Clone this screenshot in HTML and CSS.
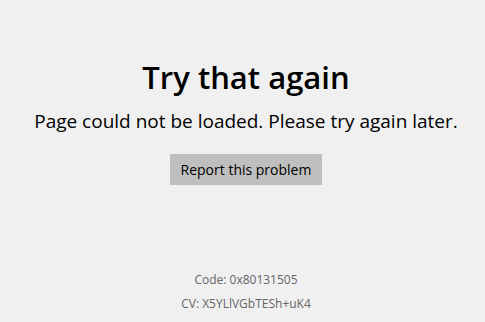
FILE: index.html
```html
<!DOCTYPE html>
<html lang="en">
<head>
    <meta charset="UTF-8">
    <title>Try that again</title>
    <link rel="stylesheet" href="styles.css">
</head>
<body>
    <div class="page">
        <h1 class="title">Try that again</h1>
        <p class="message">Page could not be loaded. Please try again later.</p>
        <button class="report">Report this problem</button>
        <div class="codes">
            <p>Code: 0x80131505</p>
            <p>CV: X5YLlVGbTESh+uK4</p>
        </div>
    </div>
</body>
</html>
```

FILE: styles.css
```css
html, body {
    margin: 0;
    height: 100%;
}

body {
    background-color: #f0f0f0;
    font-family: "Open Sans", "Noto Sans", sans-serif;
    color: #000;
}

.page {
    display: flex;
    flex-direction: column;
    align-items: center;
    height: 100%;
    padding-left: 7px;
    box-sizing: border-box;
}

.title {
    margin: 57px 0 0;
    font-size: 31px;
    font-weight: 600;
    line-height: 40px;
}

.message {
    margin: 12px 0 0;
    font-size: 19px;
    line-height: 24px;
}

.report {
    margin-top: 21px;
    width: 152px;
    height: 31px;
    border: none;
    background-color: #bfbfbf;
    font-family: inherit;
    font-size: 14px;
    color: #000;
    padding: 0;
}

.codes {
    margin-top: auto;
    margin-bottom: 6px;
    text-align: center;
    color: #666;
    font-size: 12px;
}

.codes p {
    margin: 0;
    line-height: 24px;
}
```
